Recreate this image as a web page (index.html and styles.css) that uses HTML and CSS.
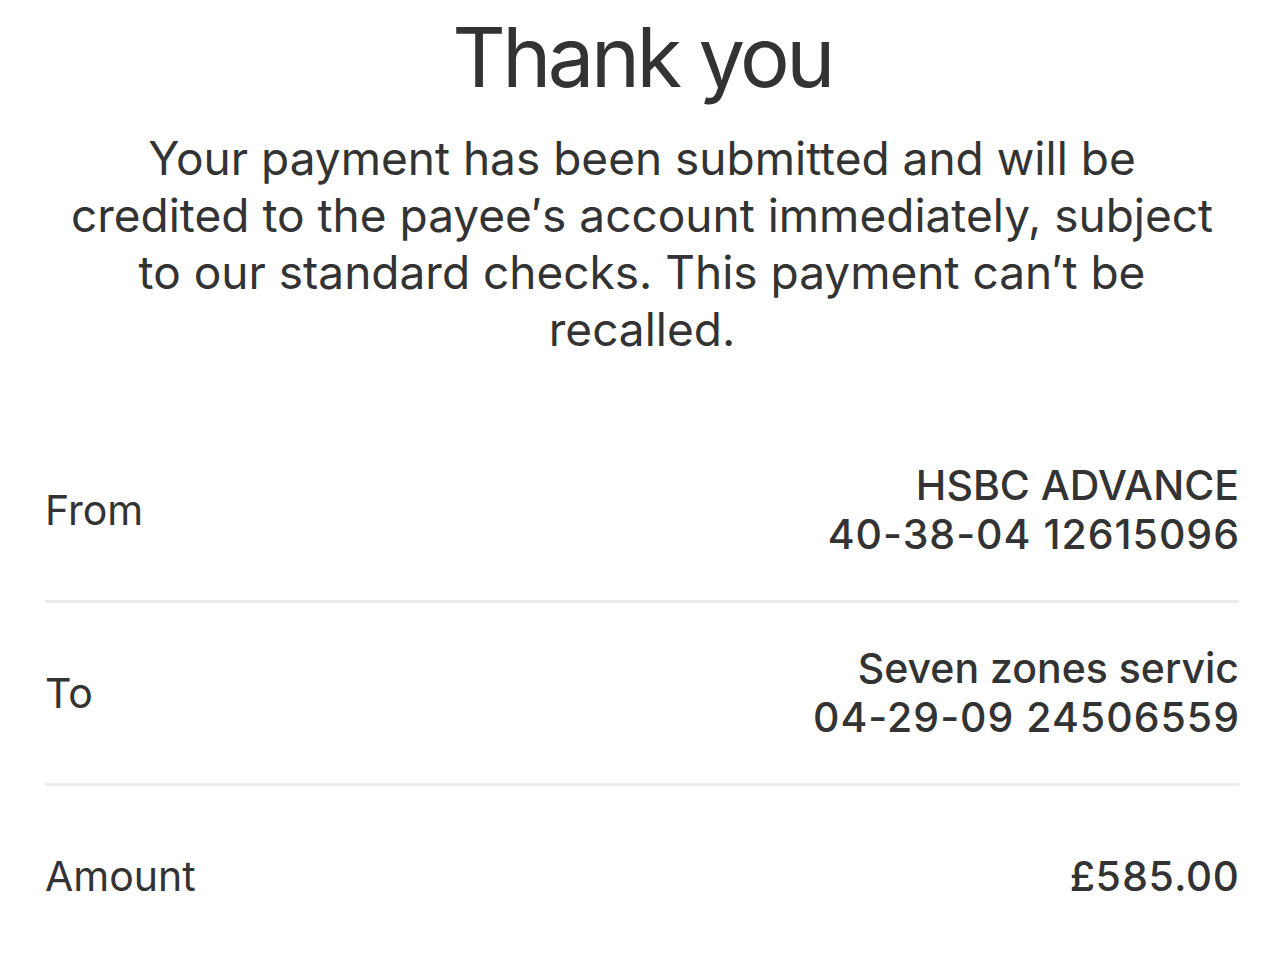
FILE: index.html
```html
<!DOCTYPE html>
<html lang="en">
<head>
<meta charset="utf-8">
<title>Thank you</title>
<link rel="stylesheet" href="styles.css">
</head>
<body>
<main class="page">
  <h1 class="title">Thank you</h1>
  <p class="message">Your payment has been submitted and will be credited to the payee′s account immediately, subject to our standard checks. This payment can′t be recalled.</p>
  <section class="details">
    <div class="row">
      <div class="label">From</div>
      <div class="value">
        <div>HSBC ADVANCE</div>
        <div class="acct">40-38-04 12615096</div>
      </div>
    </div>
    <div class="row">
      <div class="label">To</div>
      <div class="value">
        <div>Seven zones servic</div>
        <div class="acct">04-29-09 24506559</div>
      </div>
    </div>
    <div class="row">
      <div class="label">Amount</div>
      <div class="value">
        <div class="money">£585.00</div>
      </div>
    </div>
  </section>
</main>
</body>
</html>
```

FILE: styles.css
```css
html, body {
  margin: 0;
  padding: 0;
  background: #ffffff;
}
body {
  font-family: Inter, "Noto Sans", "Liberation Sans", sans-serif;
  color: #333333;
}
.page {
  padding: 0 45px;
}
.title {
  margin: 0;
  padding-top: 12px;
  text-align: center;
  font-size: 83px;
  font-weight: 400;
  line-height: 90px;
  letter-spacing: -3.5px;
}
.message {
  margin: 28px 0 0;
  text-align: center;
  font-size: 46px;
  line-height: 57px;
  font-weight: 400;
  padding: 0 22px;
}
.details {
  margin-top: 62px;
  display: flex;
  flex-direction: column;
}
.row {
  display: flex;
  justify-content: space-between;
  align-items: center;
  min-height: 180px;
  border-bottom: 3px solid #ebebeb;
}
.row:last-child {
  border-bottom: none;
}
.label {
  font-size: 41px;
  font-weight: 400;
}
.value {
  text-align: right;
  font-size: 41px;
  font-weight: 500;
  line-height: 49px;
}
.acct {
  letter-spacing: 1px;
  margin-right: -1px;
}
.money {
  font-variant-numeric: tabular-nums;
}
```
